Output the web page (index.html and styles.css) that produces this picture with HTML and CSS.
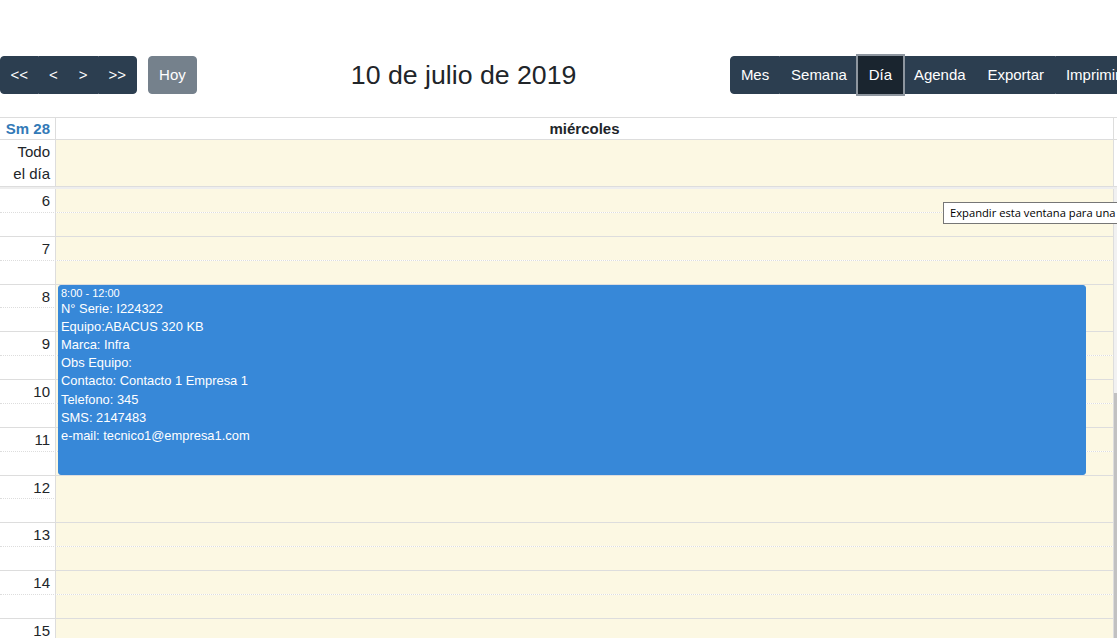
FILE: index.html
```html
<!DOCTYPE html>
<html lang="es">

<head>
    <meta charset="UTF-8">
    <meta name="viewport" content="width=device-width, initial-scale=1.0">
    <title>calendario</title>
    <link rel="stylesheet" href="styles.css">
</head>

<body>
    <div class="calendar">
        <div class="toolbar">
            <div class="toolbar-left">
                <div class="btn-group nav-group">
                    <button class="btn">&lt;&lt;</button>
                    <button class="btn">&lt;</button>
                    <button class="btn">&gt;</button>
                    <button class="btn">&gt;&gt;</button>
                </div>
                <button class="btn btn-today" disabled>Hoy</button>
            </div>
            <h2 class="title">10 de julio de 2019</h2>
            <div class="btn-group">
                <button class="btn">Mes</button>
                <button class="btn">Semana</button>
                <button class="btn active">Día</button>
                <button class="btn">Agenda</button>
                <button class="btn">Exportar</button>
                <button class="btn">Imprimir</button>
            </div>
        </div>

        <div class="view">
            <div class="head-row">
                <div class="axis week-num">Sm 28</div>
                <div class="day-head">miércoles</div>
                <div class="gutter"></div>
            </div>
            <div class="allday-row">
                <div class="axis allday-label">Todo<br>el día</div>
                <div class="allday-cell"></div>
                <div class="gutter"></div>
            </div>
            <div class="divider"></div>

            <div class="grid-body">
                <div class="slots">
                    <div class="slot"><div class="axis slot-label">6</div><div class="lane"></div></div>
                    <div class="slot half"><div class="axis"></div><div class="lane"></div></div>
                    <div class="slot"><div class="axis slot-label">7</div><div class="lane"></div></div>
                    <div class="slot half"><div class="axis"></div><div class="lane"></div></div>
                    <div class="slot"><div class="axis slot-label">8</div><div class="lane"></div></div>
                    <div class="slot half"><div class="axis"></div><div class="lane"></div></div>
                    <div class="slot"><div class="axis slot-label">9</div><div class="lane"></div></div>
                    <div class="slot half"><div class="axis"></div><div class="lane"></div></div>
                    <div class="slot"><div class="axis slot-label">10</div><div class="lane"></div></div>
                    <div class="slot half"><div class="axis"></div><div class="lane"></div></div>
                    <div class="slot"><div class="axis slot-label">11</div><div class="lane"></div></div>
                    <div class="slot half"><div class="axis"></div><div class="lane"></div></div>
                    <div class="slot"><div class="axis slot-label">12</div><div class="lane"></div></div>
                    <div class="slot half"><div class="axis"></div><div class="lane"></div></div>
                    <div class="slot"><div class="axis slot-label">13</div><div class="lane"></div></div>
                    <div class="slot half"><div class="axis"></div><div class="lane"></div></div>
                    <div class="slot"><div class="axis slot-label">14</div><div class="lane"></div></div>
                    <div class="slot half"><div class="axis"></div><div class="lane"></div></div>
                    <div class="slot"><div class="axis slot-label">15</div><div class="lane"></div></div>
                    <div class="slot half"><div class="axis"></div><div class="lane"></div></div>

                    <div class="event">
                        <div class="event-time">8:00 - 12:00</div>
                        <div class="event-title">
                            N° Serie: I224322<br>
                            Equipo:ABACUS 320 KB<br>
                            Marca: Infra<br>
                            Obs Equipo:<br>
                            Contacto: Contacto 1 Empresa 1<br>
                            Telefono: 345<br>
                            SMS: 2147483<br>
                            e-mail: tecnico1@empresa1.com
                        </div>
                    </div>
                </div>
                <div class="scrollbar">
                    <div class="thumb"></div>
                </div>
            </div>
        </div>

        <div class="tooltip">Expandir esta ventana para una</div>
    </div>
</body>

</html>
```

FILE: styles.css
```css
body {
    margin: 0;
    font-family: "Liberation Sans", Arial, sans-serif;
    font-size: 15px;
    color: #212529;
    background-color: #ffffff;
    overflow: hidden;
}

.calendar {
    position: relative;
    width: 1131px;
    padding-top: 56px;
}

/* toolbar */
.toolbar {
    display: flex;
    justify-content: space-between;
    align-items: center;
}

.toolbar-left {
    display: flex;
    gap: 11px;
}

.btn-group {
    display: flex;
}

.btn {
    font-family: inherit;
    font-size: 15px;
    line-height: 22px;
    padding: 7px 9.92px;
    border: 1px solid #2c3e50;
    background-color: #2c3e50;
    color: #ffffff;
    border-radius: 0;
    cursor: pointer;
}

.nav-group .btn {
    padding: 7px 9.5px;
}

.btn-group .btn:first-child {
    border-radius: 4px 0 0 4px;
}

.btn-group .btn:last-child {
    border-radius: 0 4px 4px 0;
}

.btn-today {
    border-radius: 4px;
    padding: 7px 10.5px;
    opacity: 0.65;
}

.btn.active {
    position: relative;
    z-index: 1;
    background-color: #1a252f;
    border-color: #1a252f;
    box-shadow: 0 0 0 2px #8e969f;
}

.title {
    margin: 0;
    font-size: 26.7px;
    font-weight: normal;
    color: #212529;
}

/* day view */
.view {
    margin-top: 23px;
}

.head-row,
.allday-row {
    display: grid;
    grid-template-columns: 56px 1058px 17px;
}

.head-row {
    border-top: 1px solid #ddd;
    border-bottom: 1px solid #ddd;
    height: 23px;
    box-sizing: border-box;
    font-weight: bold;
    line-height: 21px;
}

.axis {
    box-sizing: border-box;
    border-right: 1px solid #ddd;
    text-align: right;
    padding-right: 5px;
}

.week-num {
    color: #337ab7;
}

.day-head {
    text-align: center;
    border-right: 1px solid #ddd;
    color: #212529;
}

.allday-row {
    height: 46px;
    line-height: 22px;
}

.allday-label {
    padding-top: 1px;
}

.allday-cell {
    background-color: #fcf8e3;
    border-right: 1px solid #ddd;
}

.divider {
    height: 2px;
    border-top: 1px solid #ddd;
    background-color: #eeeeee;
}

.grid-body {
    display: flex;
}

.slots {
    position: relative;
    width: 1114px;
}

.slot {
    display: grid;
    grid-template-columns: 56px 1fr;
    height: 23.875px;
    box-sizing: border-box;
    border-bottom: 1px dotted #ddd;
}

.slot.half {
    border-bottom-style: solid;
}

.slot-label {
    line-height: 23px;
    color: #212529;
}

.lane {
    background-color: #fcf8e3;
    border-right: 1px solid #ddd;
}

.event {
    position: absolute;
    top: 95.5px;
    left: 58px;
    width: 1028px;
    height: 190px;
    box-sizing: border-box;
    padding: 1px 2px 0;
    border: 1px solid #3788d8;
    border-radius: 3px;
    background-color: #3788d8;
    color: #ffffff;
}

.event-time {
    font-size: 11px;
    line-height: 13px;
}

.event-title {
    font-size: 12.9px;
    line-height: 18.2px;
}

.scrollbar {
    width: 17px;
    background-color: #f1f1f1;
    padding-top: 204px;
}

.thumb {
    height: 260px;
    background-color: #c1c1c1;
}

.tooltip {
    position: absolute;
    top: 202px;
    left: 943px;
    padding: 0 6px;
    height: 22px;
    box-sizing: border-box;
    line-height: 20px;
    white-space: nowrap;
    font-family: "Open Sans", sans-serif;
    font-size: 11.2px;
    color: #000;
    background-color: #ffffff;
    border: 1px solid #767676;
}
```
